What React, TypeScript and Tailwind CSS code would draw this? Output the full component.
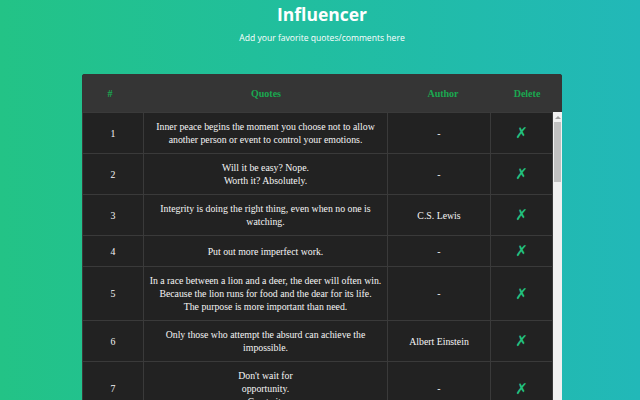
import React from "react";

type Row = { id: number; quote: string[]; author: string };

const rows: Row[] = [
  {
    id: 1,
    quote: [
      "Inner peace begins the moment you choose not to allow",
      "another person or event to control your emotions.",
    ],
    author: "-",
  },
  { id: 2, quote: ["Will it be easy? Nope.", "Worth it? Absolutely."], author: "-" },
  {
    id: 3,
    quote: ["Integrity is doing the right thing, even when no one is", "watching."],
    author: "C.S. Lewis",
  },
  { id: 4, quote: ["Put out more imperfect work."], author: "-" },
  {
    id: 5,
    quote: [
      "In a race between a lion and a deer, the deer will often win.",
      "Because the lion runs for food and the dear for its life.",
      "The purpose is more important than need.",
    ],
    author: "-",
  },
  {
    id: 6,
    quote: ["Only those who attempt the absurd can achieve the", "impossible."],
    author: "Albert Einstein",
  },
  { id: 7, quote: ["Don't wait for", "opportunity.", "Create it."], author: "-" },
];

export default function App() {
  return (
    <div className="h-screen overflow-hidden bg-linear-to-r from-[#23c386] to-[#22b8b8] pl-[4px] font-['Open_Sans',sans-serif] text-white">
      <div className="flex flex-col items-center pt-[2px]">
        <h1 className="text-[17.5px] font-bold leading-[24px]">Influencer</h1>
        <p className="mt-[5px] text-[8.6px] leading-[14px]">Add your favorite quotes/comments here</p>
      </div>

      <div className="mx-auto mt-[29px] w-[480px] overflow-hidden rounded-t-[3px] bg-[#222222] font-['Liberation_Serif',serif]">
        <div className="flex h-[38px] items-center bg-[#353535] text-[10px] font-bold text-[#1aa850]">
          <div className="w-[56px] text-center">#</div>
          <div className="w-[256px] text-center">Quotes</div>
          <div className="w-[98px] text-center">Author</div>
          <div className="w-[70px] text-center">Delete</div>
        </div>

        <div className="flex">
          <table className="w-[470px] table-fixed border-collapse text-[9.8px] leading-[13px] text-[#f5f5f5]">
            <colgroup>
              <col className="w-[61px]" />
              <col className="w-[244px]" />
              <col className="w-[103px]" />
              <col className="w-[62px]" />
            </colgroup>
            <tbody>
              {rows.map((r) => (
                <tr key={r.id}>
                  <td className="border border-[#3a3a3a] px-0 py-[7px] text-center align-middle">{r.id}</td>
                  <td className="border border-[#3a3a3a] px-0 py-[7px] text-center align-middle">
                    {r.quote.map((l, i) => (
                      <div key={i}>{l}</div>
                    ))}
                  </td>
                  <td className="border border-[#3a3a3a] px-0 py-[7px] text-center align-middle">{r.author}</td>
                  <td className="border border-[#3a3a3a] px-0 py-[7px] text-center align-middle">
                    <span className="inline-block h-[16px] font-['DejaVu_Sans',sans-serif] text-[15px] leading-[16px] text-[#22c07f]">✗</span>
                  </td>
                </tr>
              ))}
            </tbody>
          </table>

          <div className="flex w-[10px] flex-col bg-[#f1f1f1]">
            <div className="flex h-[10px] items-center justify-center">
              <svg width="6" height="4" viewBox="0 0 6 4">
                <path d="M0 4 L3 1 L6 4 Z" fill="#a3a3a3" />
              </svg>
            </div>
            <div className="mx-[1px] h-[60px] bg-[#c1c1c1]" />
          </div>
        </div>
      </div>
    </div>
  );
}
